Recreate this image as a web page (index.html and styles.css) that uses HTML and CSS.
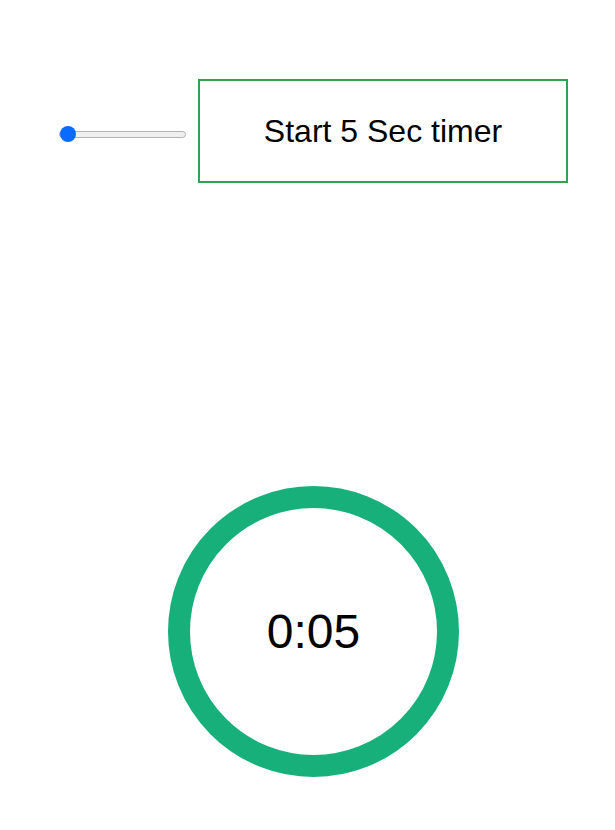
FILE: index.html
```html
<!DOCTYPE html>
<html>
<head>
<meta charset="utf-8">
<link rel="stylesheet" href="styles.css">
</head>
<body>
<div class="controls">
  <input class="slider" type="range" min="0" max="100" value="0">
  <button class="start-btn">Start 5 Sec timer</button>
</div>
<div class="timer">
  <div class="ring"><span class="time">0:05</span></div>
</div>
</body>
</html>
```
FILE: styles.css
```css
html, body {
  margin: 0;
  padding: 0;
  background: #ffffff;
  font-family: "Liberation Sans", Arial, sans-serif;
}
.controls {
  display: flex;
  align-items: center;
  padding-top: 79px;
  padding-left: 59px;
}
.slider {
  -webkit-appearance: none;
  appearance: none;
  width: 127px;
  height: 16px;
  margin: 6px 12px 0 0;
  padding: 0;
  background: transparent;
}
.slider::-webkit-slider-runnable-track {
  height: 7px;
  box-sizing: border-box;
  background: #efefef;
  border: 1px solid #b2b2b2;
  border-radius: 4px;
}
.slider::-webkit-slider-thumb {
  -webkit-appearance: none;
  width: 16px;
  height: 16px;
  margin-top: -5.5px;
  border-radius: 50%;
  background: #0a6cff;
  border: none;
}
.start-btn {
  width: 370px;
  height: 104px;
  box-sizing: border-box;
  border: 2px solid #2ea44f;
  background: #ffffff;
  font-family: "Liberation Sans", Arial, sans-serif;
  font-size: 32px;
  color: #000;
  padding: 0;
}
.timer {
  padding-top: 303px;
  padding-left: 168px;
}
.ring {
  width: 291px;
  height: 291px;
  box-sizing: border-box;
  border: 22px solid #17b07b;
  border-radius: 50%;
  display: flex;
  align-items: center;
  justify-content: center;
}
.time {
  font-size: 48px;
  color: #000;
}
```
